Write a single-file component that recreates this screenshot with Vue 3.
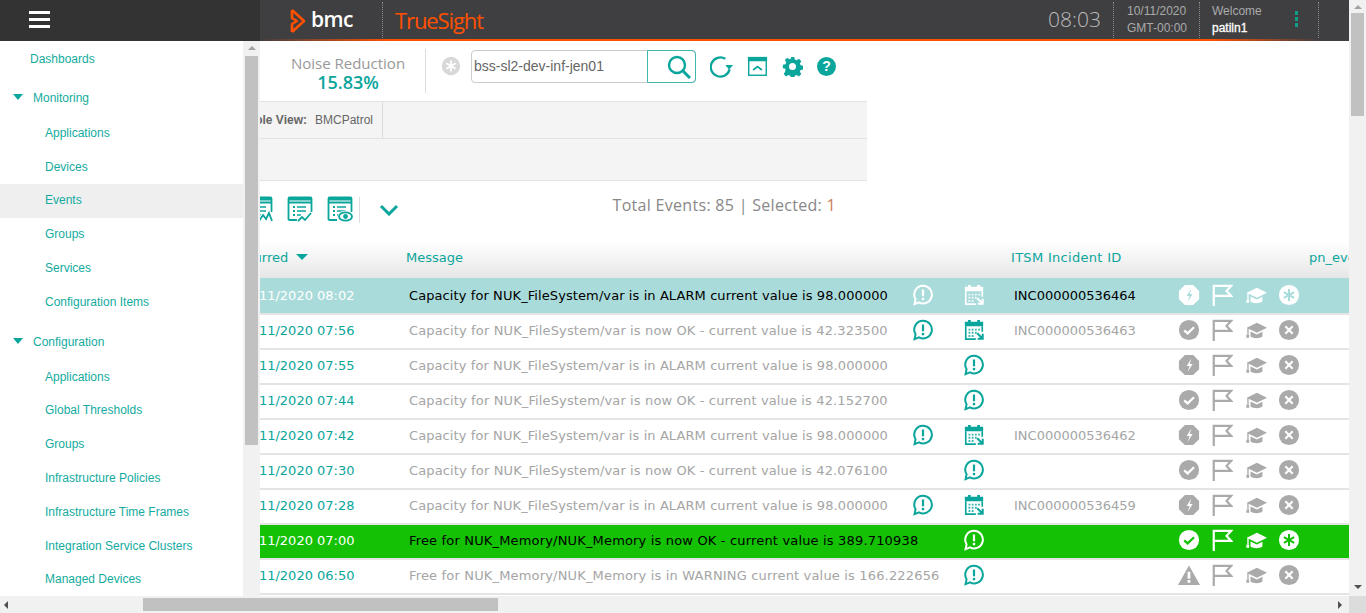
<template>
  <div class="screen">
    <!-- shared icons -->
    <svg class="sprite" aria-hidden="true">
      <symbol id="bubble" viewBox="0 0 24 24">
        <path d="M12 2a9.600 9.600 0 1 1-4.400 18.100L2.800 22l1.100-5.400A9.600 9.600 0 0 1 12 2z" fill="none" stroke="currentColor" stroke-width="2.200" />
        <rect x="10.800" y="6" width="2.400" height="7.400" fill="currentColor" />
        <circle cx="12" cy="16.400" r="1.500" fill="currentColor" />
      </symbol>
      <symbol id="calendar" viewBox="0 0 24 24">
        <path d="M2 3h3.500V1h3v2h7V1h3v2H22v5H2z" fill="currentColor" />
        <path d="M3 8v14h11M21 8v6" fill="none" stroke="currentColor" stroke-width="1.800" />
        <path opacity=".8" d="M6 10.500h2v2H6zm3.500 0h2v2h-2zm3.500 0h2v2h-2zm3.500 0h2v2h-2zM6 14h2v2H6zm3.500 0h2v2h-2zm3.500 0h2v2h-2zM6 17.500h2v2H6zm3.500 0h2v2h-2z" fill="currentColor" />
        <path d="M15.500 15.500L21 21m.500-5v5.500H16" fill="none" stroke="currentColor" stroke-width="2.200" />
      </symbol>
      <symbol id="octa" viewBox="0 0 24 24">
        <path d="M7.500 1h9L23 7.500v9L16.500 23h-9L1 16.500v-9z" fill="currentColor" />
        <path d="M14.500 5l-5 8h3.200L10.500 19.500l5.500-8.500h-3.200z" fill="var(--hole)" />
      </symbol>
      <symbol id="check" viewBox="0 0 24 24">
        <circle cx="12" cy="12" r="11" fill="currentColor" />
        <path d="M6.800 12.500l3.700 3.200L17.500 9" fill="none" stroke="var(--hole)" stroke-width="2.500" />
      </symbol>
      <symbol id="flag" viewBox="0 0 24 24">
        <path d="M3 24V2h19l-5 5.500 5 5.500H3" fill="none" stroke="currentColor" stroke-width="2.400" />
      </symbol>
      <symbol id="cap" viewBox="0 0 24 24">
        <path d="M13 4L24 9.500 13 15 4 10.500V17H2.500v-7.200L2 9.500z" fill="currentColor" />
        <path d="M6 13.500L13 17l6-3v5c-3 2.500-10 2.500-13 0z" fill="currentColor" />
        <rect x="1.500" y="17" width="3" height="3.500" fill="currentColor" />
      </symbol>
      <symbol id="cross" viewBox="0 0 24 24">
        <circle cx="12" cy="12" r="11" fill="currentColor" />
        <path d="M8 8l8 8M16 8l-8 8" fill="none" stroke="var(--hole)" stroke-width="2.400" />
      </symbol>
      <symbol id="star" viewBox="0 0 24 24">
        <circle cx="12" cy="12" r="11" fill="currentColor" />
        <path d="M12 5.500v13M6.400 8.750l11.200 6.500M17.600 8.750l-11.200 6.500" fill="none" stroke="var(--hole)" stroke-width="2.200" />
      </symbol>
      <symbol id="warn" viewBox="0 0 24 24">
        <path d="M12 1.500L24 23H0z" fill="currentColor" />
        <rect x="10.500" y="8.500" width="3" height="7.500" fill="var(--hole)" />
        <rect x="10.500" y="17.500" width="3" height="3" fill="var(--hole)" />
      </symbol>
      <symbol id="report" viewBox="0 0 26 26">
        <path d="M1.500 24V2.500q0-1 1-1h21q1 0 1 1V16M1.500 6.500h23M1.500 24H10" fill="none" stroke="currentColor" stroke-width="1.800" />
        <path d="M1.500 1.500h23v3h-23z" fill="currentColor" />
        <path d="M6 10h2v2H6zm4 .300h9v1.400h-9zM6 14h2v2H6zm4 .300h9v1.400h-9zM6 18h2v2H6zm4 .300h4v1.400h-4z" fill="currentColor" />
      </symbol>
    </svg>

    <div class="viewport">
      <header class="topbar">
        <div class="brand">
          <svg class="logo" viewBox="0 0 17 26">
            <path d="M2 2l12 11L2 24M2 2v8l5 3-5 3v8" fill="none" stroke="#ff5000" stroke-width="2.600" stroke-linejoin="round" />
          </svg>
          <span class="bmc">bmc</span>
        </div>
        <span class="dots first"></span>
        <span class="product">TrueSight</span>
        <span class="grow"></span>
        <span class="clock">08:03</span>
        <span class="dots"></span>
        <div class="stamp"><span>10/11/2020</span><span>GMT-00:00</span></div>
        <span class="dots"></span>
        <div class="user"><span>Welcome</span><b>patiln1</b></div>
        <span class="kebab"><i></i><i></i><i></i></span>
        <span class="dots"></span>
        <span class="tail"></span>
      </header>

      <section class="toolbar">
        <div class="noise">
          <span class="noise-label">Noise Reduction</span>
          <strong>15.83%</strong>
        </div>
        <span class="tool-divider"></span>
        <svg class="mark" viewBox="0 0 24 24" aria-hidden="true">
          <use href="#star" />
        </svg>
        <div class="search">
          <span class="search-value">bss-sl2-dev-inf-jen01</span>
          <span class="search-btn">
            <svg viewBox="0 0 24 24">
              <circle cx="10" cy="10" r="8" fill="none" stroke="currentColor" stroke-width="2.400" />
              <path d="M15.500 15.500L23 23" stroke="currentColor" stroke-width="3" />
            </svg>
          </span>
        </div>
        <svg class="tool refresh" viewBox="0 0 24 24">
          <path d="M16 4a10 10 0 1 0 4.500 11" fill="none" stroke="currentColor" stroke-width="2.400" />
          <path d="M16 10.500h8l-4 5z" fill="currentColor" />
        </svg>
        <svg class="tool" viewBox="0 0 24 24">
          <rect x="2" y="2" width="20" height="20" fill="none" stroke="currentColor" stroke-width="1.600" />
          <rect x="1" y="1" width="22" height="5" fill="currentColor" />
          <path d="M7 16l5-4 5 4" fill="none" stroke="currentColor" stroke-width="2" />
        </svg>
        <svg class="tool" viewBox="0 0 24 24">
          <path d="M10 1h4l.6 3 2.200.9 2.500-1.700 2.800 2.800-1.700 2.500.9 2.200 3 .6v4l-3 .6-.9 2.200 1.700 2.500-2.800 2.800-2.500-1.700-2.200.9-.6 3h-4l-.6-3-2.200-.9-2.500 1.700-2.800-2.800 1.700-2.500L4 14.600l-3-.6v-4l3-.6.9-2.200L3.200 4.700 6 1.900l2.500 1.700 2.200-.9z M12 8a4 4 0 1 0 0 8 4 4 0 0 0 0-8z" fill="currentColor" fill-rule="evenodd" />
        </svg>
        <span class="help">?</span>
      </section>

      <div class="view-row">
        <div class="view-cell"><b>Role View:</b><span>BMCPatrol</span></div>
      </div>
      <div class="filter-row"></div>

      <div class="actions">
        <svg class="act" viewBox="0 0 26 26"><use href="#report" /><path d="M12 25l4-6 3 4 3-6 3 8" fill="none" stroke="#fff" stroke-width="4" /><path d="M12 25l4-6 3 4 3-6 3 8" fill="none" stroke="currentColor" stroke-width="1.800" /></svg>
        <svg class="act" viewBox="0 0 26 26"><use href="#report" /><path d="M11 25l4-4 3 3 6-7" fill="none" stroke="#fff" stroke-width="4" /><path d="M11 25l4-4 3 3 6-7" fill="none" stroke="currentColor" stroke-width="1.800" /></svg>
        <svg class="act" viewBox="0 0 26 26"><use href="#report" /><ellipse cx="18.500" cy="20.500" rx="8" ry="6" fill="#fff" /><ellipse cx="18.500" cy="20.500" rx="6.500" ry="4.200" fill="none" stroke="currentColor" stroke-width="1.800" /><circle cx="18.500" cy="20.500" r="2.400" fill="currentColor" /></svg>
        <span class="act-divider"></span>
        <svg class="chevron" viewBox="0 0 20 12"><path d="M2 2l8 8 8-8" fill="none" stroke="currentColor" stroke-width="3" /></svg>
        <span class="grow"></span>
        <span class="totals">Total Events: 85 | Selected: <em>1</em></span>
      </div>

      <div class="thead">
        <span class="col-date">Occurred <i class="sort"></i></span>
        <span class="col-msg">Message</span>
        <span class="col-inc">ITSM Incident ID</span>
        <span class="col-pn">pn_event_id</span>
      </div>

      <div v-for="row in rows" :key="row.time" class="row" :class="row.tone">
        <span class="date">10/11/2020 {{ row.time }}</span>
        <span class="msg" :class="row.fit">{{ row.message }}</span>
        <span class="slot">
          <svg v-if="row.incident" class="ic-lg" viewBox="0 0 24 24"><use href="#bubble" /></svg>
        </span>
        <span class="slot">
          <svg class="ic-lg" viewBox="0 0 24 24"><use :href="row.incident ? '#calendar' : '#bubble'" /></svg>
        </span>
        <span class="inc">{{ row.incident }}</span>
        <span class="states">
          <svg class="ic"><use :href="'#' + row.state" /></svg>
          <svg class="ic"><use href="#flag" /></svg>
          <svg class="ic"><use href="#cap" /></svg>
          <svg class="ic"><use :href="'#' + row.last" /></svg>
        </span>
      </div>
      <div class="rows-end"></div>

      <aside class="side">
        <div class="side-top">
          <span class="burger"><i></i><i></i><i></i></span>
        </div>
        <div class="side-body">
          <nav class="menu">
            <a class="item root">Dashboards</a>
            <template v-for="group in groups" :key="group.name">
              <a class="item head"><i class="tri"></i>{{ group.name }}</a>
              <a
                v-for="link in group.links"
                :key="link"
                class="item"
                :class="{ current: group.name === 'Monitoring' && link === 'Events' }"
              >{{ link }}</a>
            </template>
          </nav>
          <div class="side-scroll">
            <i class="arrow up"></i>
            <i class="side-thumb"></i>
          </div>
        </div>
      </aside>
    </div>

    <div class="vscroll">
      <i class="arrow up"></i>
      <i class="vthumb"></i>
      <span class="grow"></span>
      <i class="arrow down"></i>
    </div>
    <div class="hscroll">
      <i class="arrow left"></i>
      <i class="hthumb"></i>
      <span class="grow"></span>
      <i class="arrow right"></i>
    </div>
    <div class="corner"></div>
  </div>
</template>

<script setup>
const capAlarm = "Capacity for NUK_FileSystem/var is in ALARM current value is 98.000000";
const capOk = (v) => `Capacity for NUK_FileSystem/var is now OK - current value is ${v}`;

const rows = [
  { time: "08:02", message: capAlarm, incident: "INC000000536464", state: "octa", last: "star", tone: "picked" },
  { time: "07:56", message: capOk("42.323500"), fit: "mid", incident: "INC000000536463", state: "check", last: "cross" },
  { time: "07:55", message: capAlarm, incident: "", state: "octa", last: "cross" },
  { time: "07:44", message: capOk("42.152700"), fit: "mid", incident: "", state: "check", last: "cross" },
  { time: "07:42", message: capAlarm, incident: "INC000000536462", state: "octa", last: "cross" },
  { time: "07:30", message: capOk("42.076100"), fit: "mid", incident: "", state: "check", last: "cross" },
  { time: "07:28", message: capAlarm, incident: "INC000000536459", state: "octa", last: "cross" },
  { time: "07:00", message: "Free for NUK_Memory/NUK_Memory is now OK - current value is 389.710938", fit: "wide", incident: "", state: "check", last: "star", tone: "green" },
  { time: "06:50", message: "Free for NUK_Memory/NUK_Memory is in WARNING current value is 166.222656", fit: "wide", incident: "", state: "warn", last: "cross" },
];

const groups = [
  {
    name: "Monitoring",
    links: ["Applications", "Devices", "Events", "Groups", "Services", "Configuration Items"],
  },
  {
    name: "Configuration",
    links: [
      "Applications",
      "Global Thresholds",
      "Groups",
      "Infrastructure Policies",
      "Infrastructure Time Frames",
      "Integration Service Clusters",
      "Managed Devices",
    ],
  },
];
</script>

<style>
html,
body {
  margin: 0;
  overflow: hidden;
}
</style>

<style scoped>
.screen {
  --teal: #0aa59b;
  display: grid;
  grid-template-columns: 1349px 17px;
  grid-template-rows: 596px 17px;
  width: 1366px;
  height: 613px;
  overflow: hidden;
  background: #fff;
  font-family: "Liberation Sans", Arial, sans-serif;
}
.sprite {
  position: absolute;
  width: 0;
  height: 0;
}
.viewport {
  position: relative;
  overflow: hidden;
}
.grow {
  flex: 1;
}

/* top bar */
.topbar {
  position: relative;
  display: flex;
  align-items: center;
  height: 41px;
  padding-left: 290px;
  box-sizing: border-box;
  background: #3f3f41;
}
.topbar::after {
  content: "";
  position: absolute;
  left: 260px;
  right: 0;
  bottom: 0;
  height: 2px;
  background: linear-gradient(90deg, #3f3f41 0, #ff5000 130px, #ff5000 950px, #3f3f41 1060px);
}
.brand {
  display: flex;
  align-items: center;
  width: 92px;
  height: 39px;
}
.logo {
  width: 17px;
  height: 26px;
}
.bmc {
  margin-left: 4px;
  margin-bottom: 2px;
  color: #fff;
  font: 600 21px/1 "Open Sans", sans-serif;
  letter-spacing: -0.5px;
}
.dots {
  width: 0;
  height: 36px;
  margin-bottom: 2px;
  border-left: 1px dotted #8a8a8a;
}
.product {
  margin-left: 12px;
  margin-bottom: 2px;
  color: #ff5000;
  font: 400 22px/1 "Open Sans", sans-serif;
  letter-spacing: -1.1px;
}
.clock {
  margin-right: 12px;
  margin-bottom: 2px;
  color: #bbb;
  font: 300 21px/1 "Open Sans", sans-serif;
}
.stamp,
.user {
  display: flex;
  flex-direction: column;
  gap: 3px;
  color: #aaa;
  font-size: 12px;
  line-height: 14px;
  margin-bottom: 3px;
}
.stamp {
  width: 85px;
  padding-left: 13px;
  box-sizing: border-box;
}
.user {
  width: 95px;
  padding-left: 12px;
  box-sizing: border-box;
}
.user b {
  color: #fff;
  font-weight: 400;
  -webkit-text-stroke: 0.3px #fff;
}
.kebab {
  display: flex;
  flex-direction: column;
  gap: 2px;
  width: 23px;
  margin-bottom: 3px;
}
.kebab i {
  width: 3px;
  height: 4px;
  background: #0f9d8a;
}
.tail {
  width: 30px;
}

/* toolbar */
.toolbar {
  display: flex;
  align-items: center;
  width: 867px;
  height: 61px;
  padding-left: 282px;
  box-sizing: border-box;
  border-bottom: 1px solid #e2e2e2;
}
.noise {
  display: flex;
  flex-direction: column;
  align-items: center;
  width: 132px;
  margin-top: 3px;
}
.noise-label {
  color: #999;
  font: 400 15px/18px "Open Sans", sans-serif;
}
.noise strong {
  color: var(--teal);
  font: 600 18px/20px "Open Sans", sans-serif;
}
.tool-divider {
  width: 1px;
  height: 44px;
  margin-left: 11px;
  background: #ddd;
}
.mark {
  --hole: #fff;
  width: 20px;
  height: 20px;
  margin-left: 15px;
  margin-bottom: 10px;
  color: #d8d8d8;
}
.search {
  display: flex;
  width: 225px;
  height: 33px;
  margin-left: 10px;
  margin-right: 14px;
  margin-bottom: 9px;
  box-sizing: border-box;
  border: 1px solid #ccc;
  border-radius: 4px;
}
.search-value {
  flex: 1;
  padding-left: 2px;
  color: #666;
  font-size: 14px;
  line-height: 31px;
}
.search-btn {
  display: flex;
  align-items: center;
  justify-content: flex-end;
  width: 49px;
  margin: -1px;
  padding-right: 4px;
  box-sizing: border-box;
  border: 1px solid #3fb8ae;
  border-radius: 0 4px 4px 0;
  color: var(--teal);
}
.search-btn svg {
  width: 24px;
  height: 24px;
}
.tool {
  width: 21px;
  height: 21px;
  margin-left: 14px;
  margin-bottom: 10px;
  color: var(--teal);
}
.refresh {
  width: 23px;
  height: 23px;
  margin-left: 0;
}
.help {
  width: 19px;
  height: 19px;
  margin-left: 14px;
  margin-bottom: 10px;
  border-radius: 50%;
  background: var(--teal);
  color: #fff;
  font-size: 14px;
  font-weight: 700;
  line-height: 19px;
  text-align: center;
}

/* role view + filter band */
.view-row {
  display: flex;
  width: 867px;
  height: 37px;
  box-sizing: border-box;
  background: #f4f4f4;
  border-bottom: 1px solid #e2e2e2;
}
.view-cell {
  display: flex;
  align-items: center;
  justify-content: flex-end;
  gap: 8px;
  width: 383px;
  padding-right: 9px;
  box-sizing: border-box;
  border-right: 1px solid #ddd;
  color: #666;
  font-size: 12px;
}
.filter-row {
  width: 867px;
  height: 42px;
  box-sizing: border-box;
  background: #f4f4f4;
  border-bottom: 1px solid #e2e2e2;
}

/* action row */
.actions {
  display: flex;
  align-items: center;
  width: 867px;
  height: 57px;
  padding-left: 247px;
  padding-right: 31px;
  box-sizing: border-box;
  color: var(--teal);
}
.act {
  width: 26px;
  height: 26px;
  margin-right: 14px;
  margin-bottom: 2px;
}
.act-divider {
  width: 1px;
  height: 26px;
  margin-left: -8px;
  background: #ddd;
}
.chevron {
  width: 20px;
  height: 12px;
  margin-left: 19px;
}
.totals {
  color: #888;
  font: 400 16px/1 "Open Sans", sans-serif;
  letter-spacing: 0.3px;
  margin-bottom: 10px;
}
.totals em {
  color: #c9805a;
  font-style: normal;
}

/* table */
.thead {
  display: grid;
  grid-template-columns: 406px 605px 298px 40px;
  align-items: center;
  height: 40px;
  padding-bottom: 2px;
  box-sizing: border-box;
  overflow: hidden;
  background: linear-gradient(#fff 10%, #e6e6e6);
  color: var(--teal);
  font: 13px "DejaVu Sans", Verdana, sans-serif;
  white-space: nowrap;
}
.col-date {
  padding-left: 229px;
}
.col-inc {
  letter-spacing: 0.3px;
}
.sort {
  display: inline-block;
  margin-left: 4px;
  border: 6px solid transparent;
  border-top: 6px solid var(--teal);
  border-bottom: 0;
  vertical-align: 2px;
}
.row {
  --hole: #fff;
  display: grid;
  grid-template-columns: 409px 491px 46px 56px 176px 170px;
  align-items: center;
  height: 35px;
  padding-bottom: 2px;
  box-sizing: border-box;
  border-top: 2px solid #e4e4e4;
  color: #a5a5a5;
  font: 13px "DejaVu Sans", Verdana, sans-serif;
  white-space: nowrap;
}
.rows-end {
  height: 2px;
  background: #e4e4e4;
}
.date {
  padding-left: 238px;
  color: var(--teal);
}
.msg {
  letter-spacing: 0.09px;
}
.msg.mid {
  letter-spacing: 0.13px;
}
.msg.wide {
  letter-spacing: 0.17px;
}
.slot {
  display: flex;
  justify-content: center;
  margin-bottom: 2px;
  color: var(--teal);
}
.ic-lg {
  width: 22px;
  height: 22px;
}
.inc {
  padding-left: 12px;
}
.states {
  display: flex;
  gap: 11.3px;
  margin-bottom: 2px;
  color: #aaa;
}
.ic {
  width: 22px;
  height: 22px;
}
.picked {
  --hole: #aadbdb;
  border-top-color: #aadbdb;
  background: #aadbdb;
  color: #000;
}
.green {
  --hole: #14c104;
  background: #14c104;
  color: #000;
}
.picked .date,
.green .date,
.picked .slot,
.green .slot,
.picked .states,
.green .states {
  color: #fff;
}

/* left menu, laid over the page */
.side {
  position: absolute;
  top: 0;
  left: 0;
  bottom: 0;
  display: flex;
  flex-direction: column;
  width: 260px;
}
.side-top {
  display: flex;
  align-items: center;
  height: 41px;
  padding-left: 29px;
  box-sizing: border-box;
  background: #333;
}
.burger {
  display: flex;
  flex-direction: column;
  gap: 4px;
  margin-bottom: 3px;
}
.burger i {
  width: 21px;
  height: 3px;
  background: #fff;
}
.side-body {
  flex: 1;
  display: flex;
  min-height: 0;
}
.menu {
  flex: 1;
  display: flex;
  flex-direction: column;
  overflow: hidden;
  background: #fff;
}
.item {
  flex: none;
  height: 33.8px;
  padding-left: 45px;
  color: #13aba0;
  font-size: 12px;
  line-height: 33.8px;
}
.root {
  padding-left: 30px;
  margin-top: 2px;
  margin-bottom: 5px;
}
.head {
  position: relative;
  height: 35px;
  padding-left: 33px;
  margin-top: 6px;
}
.root + .head {
  margin-top: 0;
}
.tri {
  position: absolute;
  left: 13px;
  top: 12px;
  border: 5px solid transparent;
  border-top: 6px solid var(--teal);
  border-bottom: 0;
}
.current {
  background: #efefef;
}
.side-scroll {
  display: flex;
  flex-direction: column;
  align-items: center;
  width: 17px;
  background: #f1f1f1;
}
.side-thumb {
  width: 13px;
  height: 389px;
  margin-top: 6px;
  background: #c1c1c1;
}

/* page scrollbars */
.arrow {
  flex: none;
  width: 0;
  height: 0;
  border: 4px solid transparent;
}
.arrow.up {
  margin-top: 5px;
  border-top: 0;
  border-bottom: 4px solid #a3a3a3;
}
.arrow.down {
  margin-bottom: 7px;
  border-bottom: 0;
  border-top: 4px solid #505050;
}
.arrow.left {
  margin-left: 4px;
  border-left: 0;
  border-right: 4px solid #505050;
}
.arrow.right {
  margin-right: 7px;
  border-right: 0;
  border-left: 4px solid #505050;
}
.vscroll {
  display: flex;
  flex-direction: column;
  align-items: center;
  background: #f1f1f1;
}
.vthumb {
  width: 13px;
  height: 103px;
  margin-top: 4px;
  background: #c1c1c1;
}
.hscroll {
  display: flex;
  align-items: center;
  background: #f1f1f1;
}
.hthumb {
  width: 355px;
  height: 13px;
  margin-left: 135px;
  background: #c1c1c1;
}
.corner {
  background: #dcdcdc;
}
</style>
